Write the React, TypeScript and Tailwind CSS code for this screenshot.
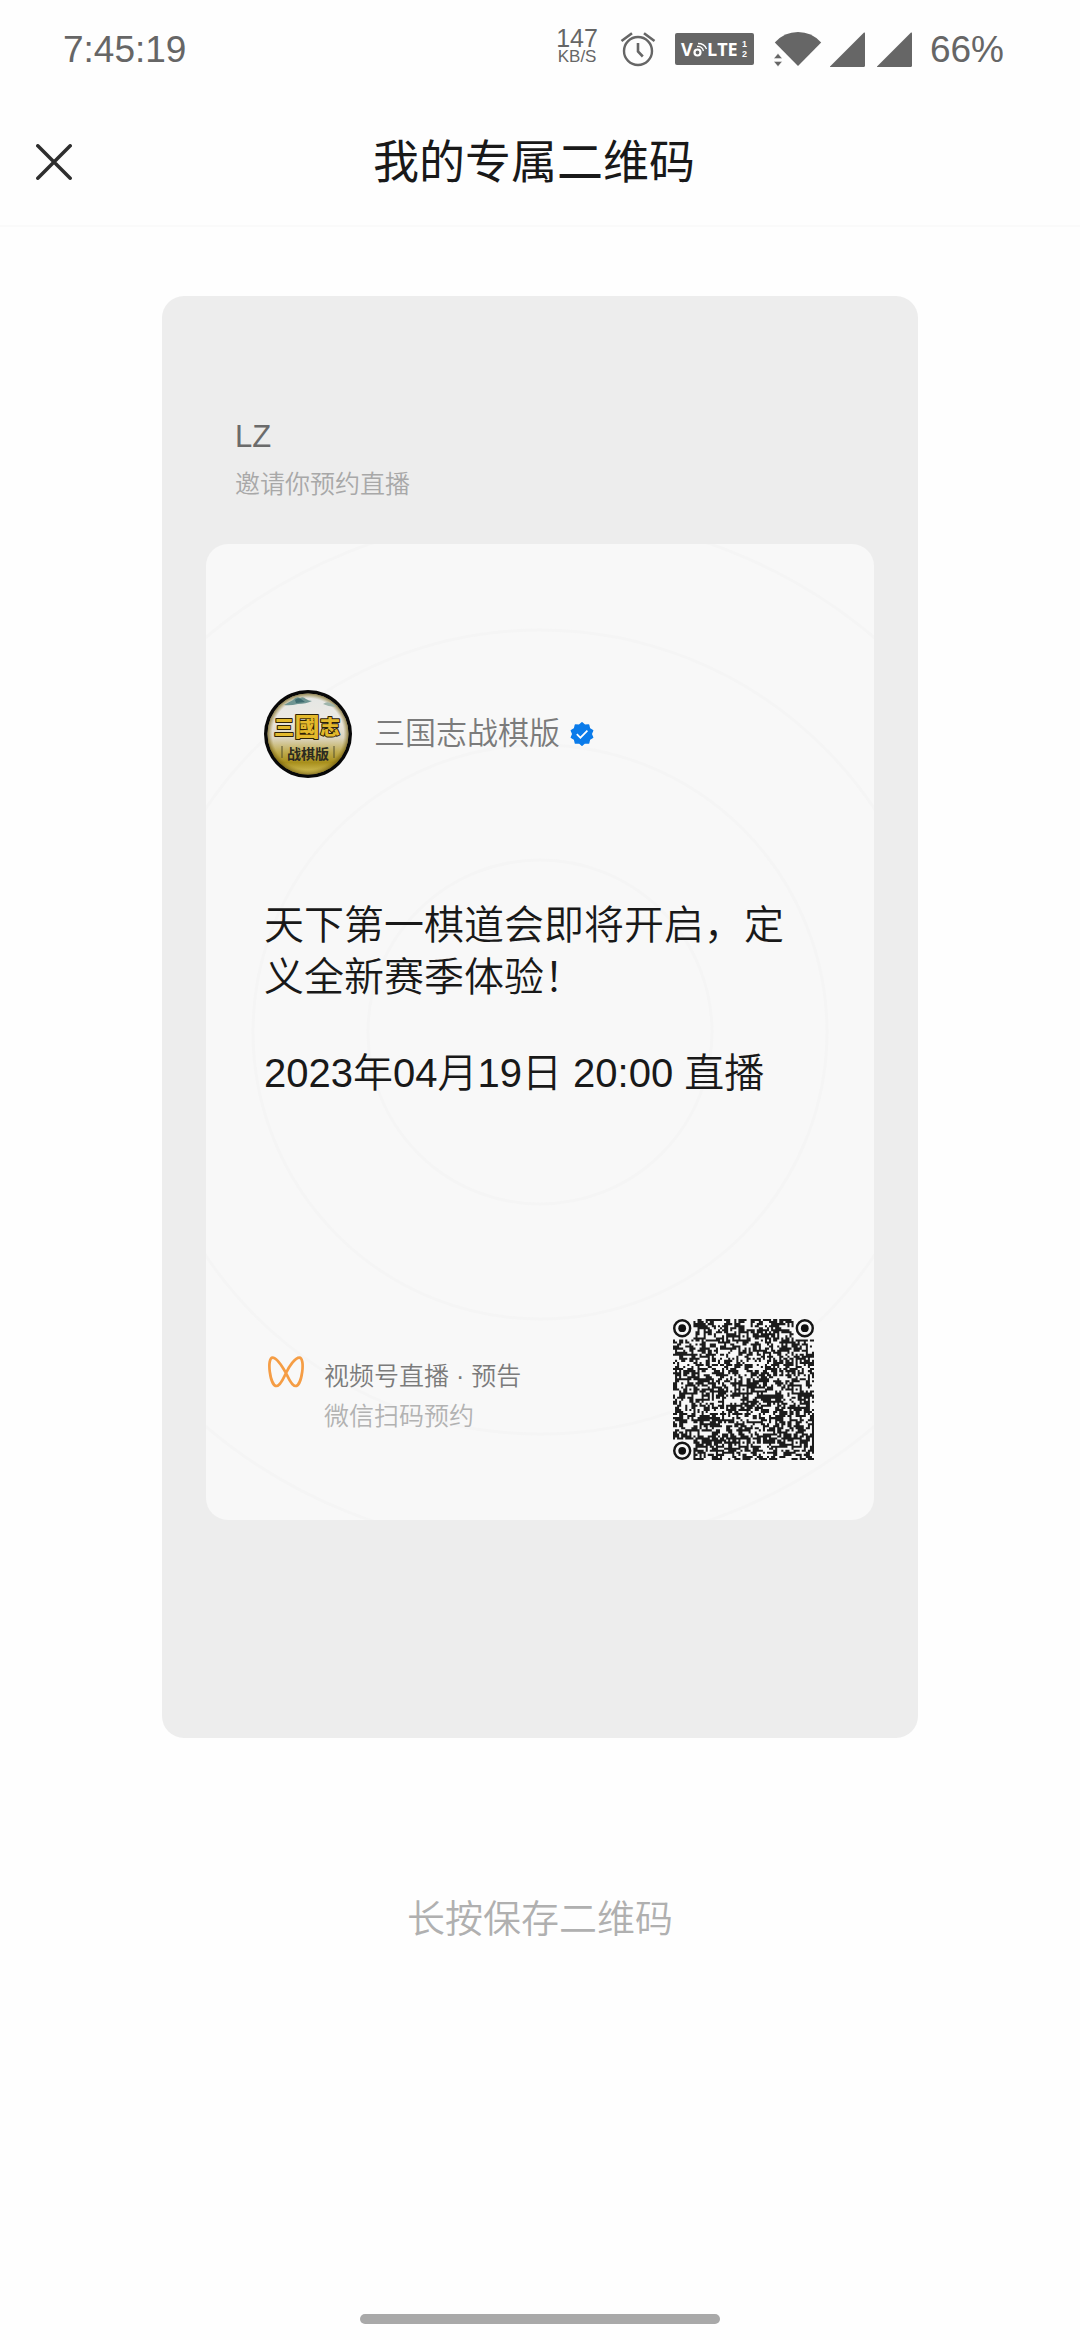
import React from "react";

const QR_SIZE = 69;

function buildQrPath(): string {
  const aligns = [
    [34, 8],
    [8, 34],
    [34, 34],
    [60, 34],
    [34, 60],
    [60, 60],
  ];
  let seed = 20230419;
  const next = () => {
    seed = (Math.imul(seed, 1664525) + 1013904223) >>> 0;
    return seed / 4294967296;
  };
  const cells: boolean[][] = [];
  let d = "";
  for (let y = 0; y < QR_SIZE; y++) {
    cells.push([]);
    for (let x = 0; x < QR_SIZE; x++) {
      let on = next() < 0.55;
      const pick = next();
      if (pick < 0.14 && x > 0) on = cells[y][x - 1];
      else if (pick > 0.86 && y > 0) on = cells[y - 1][x];
      cells[y].push(on);
      const nearLeft = x < 10;
      const nearRight = x > QR_SIZE - 11;
      const nearTop = y < 10;
      const nearBottom = y > QR_SIZE - 11;
      if ((nearLeft && nearTop) || (nearRight && nearTop) || (nearLeft && nearBottom)) continue;
      for (const [ax, ay] of aligns) {
        const r = Math.max(Math.abs(x - ax), Math.abs(y - ay));
        if (r <= 2) on = r !== 1;
      }
      if (on) d += `M${x} ${y}h1v1h-1z`;
    }
  }
  return d;
}

const qrPath = buildQrPath();

function QrCode() {
  return (
    <svg className="size-[141px] shrink-0" viewBox="0 0 69 69" role="img" aria-label="二维码">
      <path d={qrPath} fill="#1b1b1b" />
      {[
        [4.5, 4.5],
        [64.5, 4.5],
        [4.5, 64.5],
      ].map(([cx, cy]) => (
        <g key={`${cx}-${cy}`}>
          <circle cx={cx} cy={cy} r="3.9" fill="none" stroke="#151515" strokeWidth="1.2" />
          <circle cx={cx} cy={cy} r="1.9" fill="#111" />
        </g>
      ))}
    </svg>
  );
}

function AlarmIcon() {
  return (
    <svg className="h-9 w-9" viewBox="0 0 36 36" fill="none" stroke="#666" strokeWidth="2.4">
      <circle cx="18" cy="20" r="14" />
      <path d="M18 12v8.500l4.800 5" strokeWidth="2.600" />
      <path d="M1.500 10L12 2.200M34.500 10L24 2.200" strokeWidth="2.600" />
    </svg>
  );
}

function VolteIcon() {
  return (
    <svg className="h-8 w-20" viewBox="0 0 80 32" role="img" aria-label="VoLTE">
      <rect width="79" height="32" rx="2" fill="#666" />
      <g fill="#fff" fontFamily="'Open Sans', sans-serif" fontWeight="700">
        <text x="6" y="23" fontSize="18">V</text>
        <text x="32" y="23" fontSize="18">LTE</text>
      </g>
      <g fill="#fff" fontFamily="'Liberation Sans', sans-serif" fontWeight="700" fontSize="9">
        <text x="67" y="14">1</text>
        <text x="67" y="24">2</text>
      </g>
      <g fill="none" stroke="#fff">
        <circle cx="22.500" cy="19.500" r="3" strokeWidth="2.200" />
        <path d="M22 13.500q5-.5 6.500 4.500" strokeWidth="1.300" />
        <path d="M23 10.500q6.500 0 8.500 5.500" strokeWidth="1.300" />
      </g>
    </svg>
  );
}

function WifiIcon() {
  return (
    <svg className="h-9 w-12" viewBox="0 0 48 36" fill="#666">
      <path d="M24 35L.8 11.400Q10.500 1 24 1T47.200 11.400Z" />
      <path d="M4 22.500l4.200 5H-.2zM4 35.500l4.200-5H-.2z" stroke="#fff" strokeWidth=".4" />
    </svg>
  );
}

function SignalIcon() {
  return (
    <svg className="h-[35px] w-[35px]" viewBox="0 0 35 35" fill="#666">
      <path d="M0 34.600L34 .6Q35 0 35 1.500V33.500Q35 35 33.500 35H.5Q-.2 35 0 34.600Z" />
    </svg>
  );
}

function CloseIcon() {
  return (
    <svg className="size-9" viewBox="0 0 36 36" fill="none" stroke="#2e2e2e" strokeWidth="3.500" strokeLinecap="round">
      <path d="M1.800 1.800L34.200 34.200M34.200 1.800L1.800 34.200" />
    </svg>
  );
}

function Avatar() {
  return (
    <svg className="size-[88px] shrink-0" viewBox="0 0 88 88" role="img" aria-label="三国志战棋版">
      <defs>
        <linearGradient id="coin" x1="0" y1="0" x2="0" y2="1">
          <stop offset="0" stopColor="#e3e6e4" />
          <stop offset=".3" stopColor="#ece9e4" />
          <stop offset=".55" stopColor="#dcd5c0" />
          <stop offset=".72" stopColor="#c0ac50" />
          <stop offset=".85" stopColor="#a88f1c" />
          <stop offset="1" stopColor="#d8c560" />
        </linearGradient>
        <radialGradient id="rim" cx=".5" cy=".5" r=".5">
          <stop offset=".88" stopColor="#8a741a" stopOpacity="0" />
          <stop offset="1" stopColor="#6f5b10" stopOpacity=".7" />
        </radialGradient>
      </defs>
      <circle cx="44" cy="44" r="44" fill="#080808" />
      <circle cx="44" cy="44" r="40.500" fill="url(#coin)" />
      <circle cx="44" cy="44" r="40.500" fill="url(#rim)" />
      <path d="M20 15q5-3 9-5 3-4 7-2 3-2 6 1 3 2 6 2-6 3-14 3-8 2-14 1z" fill="#6f9592" />
      <path d="M31 10q3-3 6-1l4 3-9 1z" fill="#3f6d70" />
      <path d="M59 14q4-3 7-1 4 1 6 4-7 0-13-3z" fill="#9fb5ab" />
      <g
        fontFamily="'Noto Sans CJK TC', sans-serif"
        fontWeight="900"
        fill="#e3b92c"
        stroke="#2c2106"
        strokeWidth="2"
        strokeLinejoin="round"
        paintOrder="stroke"
        textAnchor="middle"
      >
        <text x="20" y="45" fontSize="20">三</text>
        <text x="43" y="46" fontSize="25">國</text>
        <text x="66" y="45" fontSize="20">志</text>
      </g>
      <text
        x="44"
        y="69"
        fontSize="14"
        fontWeight="700"
        fill="#2b2a20"
        textAnchor="middle"
        fontFamily="'Noto Sans CJK SC', sans-serif"
      >
        战棋版
      </text>
      <path d="M18 56v12M70 56v12" stroke="#55502f" strokeWidth="1" />
    </svg>
  );
}

function VerifiedIcon() {
  const points = Array.from({ length: 20 }, (_, i) => {
    const r = i % 2 === 0 ? 11.2 : 9.2;
    const a = (Math.PI * i) / 10 - Math.PI / 2;
    return `${(12 + r * Math.cos(a)).toFixed(2)},${(12 + r * Math.sin(a)).toFixed(2)}`;
  }).join(" ");
  return (
    <svg className="size-6 shrink-0" viewBox="0 0 24 24" role="img" aria-label="已认证">
      <polygon points={points} fill="#0a7bea" stroke="#0a7bea" strokeWidth="1.500" strokeLinejoin="round" />
      <path d="M6.800 12.200l3.600 3.500 7-7" fill="none" stroke="#fff" strokeWidth="1.700" />
    </svg>
  );
}

function ChannelsIcon() {
  return (
    <svg className="h-8 w-9 shrink-0" viewBox="0 0 36 32" fill="none" stroke="#f59d45" strokeWidth="2.700" strokeLinejoin="round">
      <path d="M18 17C14 10 9 1.600 4.600 1.600C-1.600 1.600 2 30 8.500 30C12.500 30 15.500 22 18 17C21 10.500 27 1.600 31.400 1.600C37.600 1.600 34 30 27.500 30C23.500 30 20.500 22 18 17Z" />
    </svg>
  );
}

function Rings() {
  return (
    <svg
      className="pointer-events-none absolute inset-0 h-full w-full"
      viewBox="0 0 668 976"
      preserveAspectRatio="xMidYMid slice"
      fill="none"
      stroke="#f5f5f5"
      strokeWidth="3"
      aria-hidden="true"
    >
      {[172, 287, 402, 517].map((r) => (
        <circle key={r} cx="334" cy="488" r={r} />
      ))}
    </svg>
  );
}

export default function App() {
  return (
    <div className="flex min-h-screen flex-col bg-[#fefefe] font-['Liberation_Sans','Noto_Sans_CJK_SC',sans-serif]">
      <div className="flex h-[98px] items-center justify-between pr-[76px] pl-[63px] text-[37px] leading-none text-[#666]">
        <time>7:45:19</time>
        <div className="flex items-center">
          <div className="mr-[22px] flex flex-col items-center pb-1">
            <span className="text-[25px] leading-[19px]">147</span>
            <span className="text-[17px] leading-[18px]">KB/S</span>
          </div>
          <div className="mr-5 flex items-center gap-[19px]">
            <AlarmIcon />
            <VolteIcon />
            <WifiIcon />
          </div>
          <div className="mr-[18px] -ml-3 flex items-center gap-3">
            <SignalIcon />
            <SignalIcon />
          </div>
          <span>66%</span>
        </div>
      </div>

      <header className="grid h-[129px] grid-cols-[1fr_auto_1fr] items-center border-b-2 border-[#fafafa] pr-12 pl-9">
        <button type="button" aria-label="关闭" className="justify-self-start">
          <CloseIcon />
        </button>
        <h1 className="text-[46px] leading-[64px] font-normal text-[#191919]">我的专属二维码</h1>
      </header>

      <main className="flex flex-1 flex-col items-center pt-[69px]">
        <section className="w-[70%] rounded-[22px] bg-[#ededed] px-11 pt-[118px] pb-[218px]">
          <div className="flex flex-col gap-1 pl-[29px]">
            <p className="text-[31px] leading-[46px] text-[#6b6b6b]">LZ</p>
            <p className="text-[25px] leading-[40px] font-[350] text-[#a8a8a8]">邀请你预约直播</p>
          </div>

          <article className="relative mt-10 overflow-hidden rounded-[22px] bg-[#f8f8f8] pt-[146px] pr-[60px] pb-[60px] pl-[58px]">
            <Rings />
            <div className="relative">
              <div className="flex items-center">
                <Avatar />
                <span className="ml-[22px] text-[31px] leading-[46px] font-[350] text-[#7b7b7b]">三国志战棋版</span>
                <span className="ml-[10px]">
                  <VerifiedIcon />
                </span>
              </div>

              <h2 className="mt-[121px] text-[40px] leading-[52px] font-[350] text-[#191919]">
                天下第一棋道会即将开启，定义全新赛季体验！
              </h2>
              <p className="mt-11 text-[40px] leading-[52px] font-[350] text-[#191919]">2023年04月19日 20:00 直播</p>

              <div className="mt-[220px] flex items-end justify-between">
                <div className="flex items-start gap-5 pb-6 pl-1">
                  <ChannelsIcon />
                  <div className="text-[25px] leading-[40px] font-[350]">
                    <p className="text-[#7b7b7b]">视频号直播 · 预告</p>
                    <p className="text-[#b2b2b2]">微信扫码预约</p>
                  </div>
                </div>
                <QrCode />
              </div>
            </div>
          </article>
        </section>

        <p className="mt-[155px] text-[38px] leading-[52px] font-[350] text-[#b0b0b0]">长按保存二维码</p>
      </main>

      <div className="flex justify-center pb-4">
        <div className="h-[10px] w-1/3 rounded-full bg-[#a9a9a9]" />
      </div>
    </div>
  );
}
